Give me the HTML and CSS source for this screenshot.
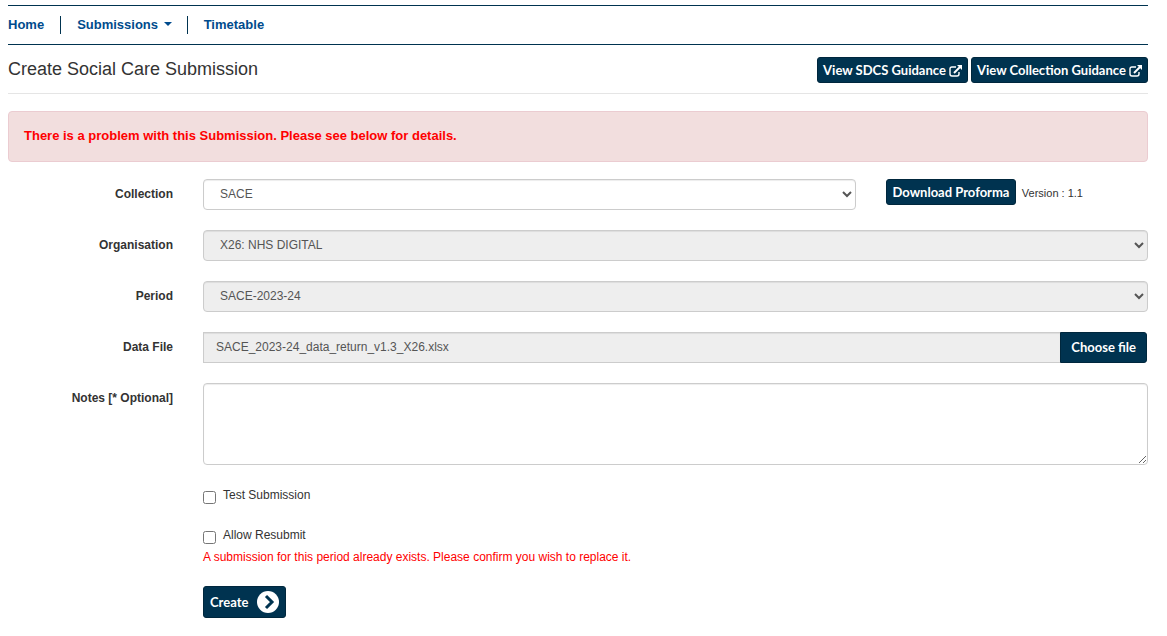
FILE: index.html
```html
<!DOCTYPE html>
<html lang="en">
<head>
  <meta charset="UTF-8">
  <meta name="viewport" content="width=device-width, initial-scale=1">
  <title>Create Social Care Submission</title>
  <link rel="stylesheet" href="styles.css">
</head>
<body>

<nav class="navbar">
  <a href="#">Home</a>
  <a href="#">Submissions <span class="caret"></span></a>
  <a href="#">Timetable</a>
</nav>

<header class="page-header">
  <h1>Create Social Care Submission</h1>
  <div class="header-buttons">
    <button type="button" class="btn">View SDCS Guidance
      <svg class="icon-link" viewBox="0 0 13 12"><path class="box" d="M7 2H3Q1 2 1 4V9Q1 11 3 11H8Q10 11 10 9V7"/><path class="arrow" d="M5 8L11 2"/><path class="head" d="M8 0H13V5Z"/></svg>
    </button>
    <button type="button" class="btn">View Collection Guidance
      <svg class="icon-link" viewBox="0 0 13 12"><path class="box" d="M7 2H3Q1 2 1 4V9Q1 11 3 11H8Q10 11 10 9V7"/><path class="arrow" d="M5 8L11 2"/><path class="head" d="M8 0H13V5Z"/></svg>
    </button>
  </div>
</header>

<div class="alert">There is a problem with this Submission. Please see below for details.</div>

<form>
  <div class="form-row">
    <label class="control-label" for="collection">Collection</label>
    <select class="form-control short" id="collection">
      <option>SACE</option>
    </select>
    <div class="proforma">
      <button type="button" class="btn">Download Proforma</button>
      <span class="version">Version : 1.1</span>
    </div>
  </div>

  <div class="form-row">
    <label class="control-label" for="organisation">Organisation</label>
    <select class="form-control" id="organisation" disabled>
      <option>X26: NHS DIGITAL</option>
    </select>
  </div>

  <div class="form-row">
    <label class="control-label" for="period">Period</label>
    <select class="form-control" id="period" disabled>
      <option>SACE-2023-24</option>
    </select>
  </div>

  <div class="form-row">
    <label class="control-label" for="datafile">Data File</label>
    <div class="file-group">
      <input type="text" class="form-control" id="datafile" value="SACE_2023-24_data_return_v1.3_X26.xlsx" readonly>
      <button type="button" class="btn btn-file">Choose file</button>
    </div>
  </div>

  <div class="form-row">
    <label class="control-label" for="notes">Notes [* Optional]</label>
    <textarea class="form-control" id="notes"></textarea>
  </div>

  <div class="form-row">
    <div class="controls">
      <div class="checkbox">
        <input type="checkbox" id="test">
        <label for="test">Test Submission</label>
      </div>
      <div class="checkbox">
        <input type="checkbox" id="resubmit">
        <label for="resubmit">Allow Resubmit</label>
      </div>
      <p class="error">A submission for this period already exists. Please confirm you wish to replace it.</p>
      <button type="submit" class="btn btn-create">Create
        <svg class="icon-next" viewBox="0 0 22 22"><circle cx="11" cy="11" r="11"/><path d="M9 5L15 11L9 17"/></svg>
      </button>
    </div>
  </div>
</form>

</body>
</html>
```
FILE: styles.css
```css
* {
  box-sizing: border-box;
}

body {
  margin: 5px 19px 16px 8px;
  font-family: "Liberation Sans", Arial, sans-serif;
  font-size: 12px;
  line-height: 18px;
  color: #333;
  background-color: #fff;
}

/* Navigation */
.navbar {
  display: flex;
  align-items: center;
  height: 40px;
  border-top: 1px solid #003350;
  border-bottom: 1px solid #003350;
}

.navbar a {
  padding: 0 15px 0 16px;
  border-left: 1px solid #003350;
  font-size: 13px;
  font-weight: bold;
  color: #004b8d;
  text-decoration: none;
}

.navbar a:first-child {
  padding-left: 0;
  padding-right: 16px;
  border-left: none;
}

.caret {
  display: inline-block;
  margin-left: 2px;
  vertical-align: 3px;
  border-top: 4px solid;
  border-left: 4px solid transparent;
  border-right: 4px solid transparent;
}

.page-header {
  display: flex;
  justify-content: space-between;
  align-items: center;
  height: 49px;
  margin-bottom: 17px;
  border-bottom: 1px solid #e5e5e5;
}

h1 {
  margin: 0;
  font-size: 18px;
  font-weight: normal;
}

.header-buttons {
  display: flex;
  gap: 3px;
  padding-top: 2px;
}

.header-buttons .btn {
  padding: 0 5px;
}

.btn {
  height: 26px;
  padding: 0 6px;
  border: 1px solid #00273d;
  border-radius: 3px;
  background-color: #003350;
  font-family: Lato, sans-serif;
  font-size: 13px;
  font-weight: bold;
  line-height: 18px;
  color: #fff;
  white-space: nowrap;
  cursor: pointer;
}

.icon-link {
  width: 13px;
  height: 12px;
  vertical-align: -2px;
  fill: none;
  stroke: #fff;
}

.icon-link .box {
  stroke-width: 1.4;
}

.icon-link .arrow {
  stroke-width: 2;
}

.icon-link .head {
  fill: #fff;
  stroke: none;
}

.alert {
  margin-bottom: 17px;
  padding: 15px 15px 16px;
  border: 1px solid #ebccd1;
  border-radius: 4px;
  background-color: #f2dede;
  font-size: 13px;
  font-weight: bold;
  color: #f00;
}

/* Form */
.form-row {
  display: grid;
  grid-template-columns: repeat(12, 1fr);
  column-gap: 30px;
  margin-bottom: 20px;
}

.control-label {
  grid-column: span 2;
  padding-top: 6px;
  font-weight: bold;
  text-align: right;
}

.form-control {
  grid-column: span 10;
  width: 100%;
  height: 31px;
  padding: 5px 12px 6px;
  border: 1px solid #ccc;
  border-radius: 4px;
  background-color: #fff;
  box-shadow: inset 0 1px 1px rgba(0, 0, 0, .075);
  font-family: inherit;
  font-size: 12px;
  line-height: 18px;
  color: #555;
}

.form-control:disabled,
.form-control:read-only:not(select) {
  background-color: #eee;
  opacity: 1;
}

select.form-control {
  padding-right: 0;
}

.form-control.short {
  grid-column: span 7;
}

textarea.form-control {
  display: block;
  height: 82px;
}

.proforma {
  grid-column: span 3;
}

.version {
  margin-left: 2px;
  font-size: 11px;
}

.file-group {
  grid-column: span 10;
  display: flex;
  padding-right: 1px;
}

.file-group .form-control {
  border-right: none;
  border-radius: 0;
}

.btn-file {
  height: 31px;
  padding: 0 10px 2px;
  border-radius: 0 3px 3px 0;
}

.controls {
  grid-column: 3 / -1;
}

.checkbox {
  display: flex;
  height: 40px;
}

.checkbox input {
  width: 13px;
  height: 13px;
  margin: 6px 7px 0 0;
}

.checkbox label {
  padding-top: 1px;
}

.checkbox + .checkbox {
  height: 23px;
}

.error {
  margin: 0 0 20px;
  color: #f00;
}

.btn-create {
  display: flex;
  align-items: center;
  gap: 9px;
  height: 32px;
  padding-bottom: 1px;
}

.icon-next {
  width: 22px;
  height: 22px;
  fill: #fff;
}

.icon-next path {
  fill: none;
  stroke: #003350;
  stroke-width: 3;
}
```
